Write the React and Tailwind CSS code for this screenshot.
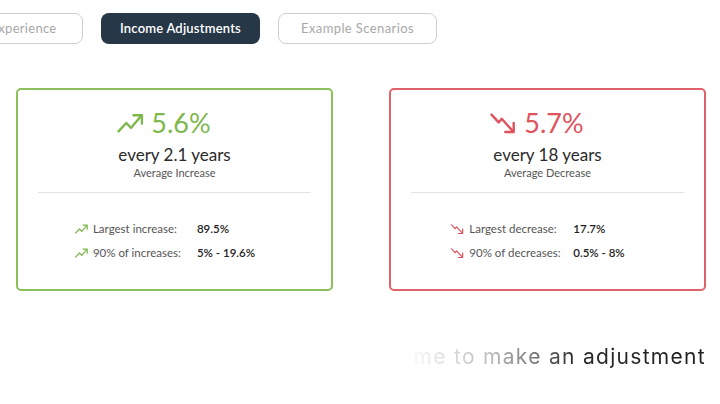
import React from "react";

const UpIcon = ({ className }) => (
  <svg viewBox="0 0 24 20" fill="none" stroke="currentColor" strokeWidth="2" strokeLinecap="round" strokeLinejoin="round" className={className}>
    <polyline points="2,17 8.5,10 12.5,14 21,4" />
    <polyline points="14.5,3.5 21.5,3.5 21.5,10.5" />
  </svg>
);

const DownIcon = ({ className }) => (
  <svg viewBox="0 0 24 20" fill="none" stroke="currentColor" strokeWidth="2" strokeLinecap="round" strokeLinejoin="round" className={className}>
    <polyline points="2,3 8,9.5 10.5,6.5 20,17" />
    <polyline points="20.5,10 20.5,17.5 13.5,17.5" />
  </svg>
);

function Card({ color, border, Icon, value, every, label, rows }) {
  return (
    <div className={`w-[317px] h-[203px] border-2 ${border} rounded-[5px] bg-white flex flex-col items-center pt-[14px]`}>
      <div className={`flex items-center gap-[6px] mr-[22px] ${color}`}>
        <Icon className="w-[29px] h-[24px]" />
        <span className="text-[27px] leading-[38px]">{value}</span>
      </div>
      <div className="text-[17px] leading-[20px] text-[#2a2a2a] mt-[3px]">{every}</div>
      <div className="text-[11px] leading-[14px] text-[#555] mt-[1px]">{label}</div>
      <div className="w-[273px] h-px bg-[#e2e2e2] mt-[12px]" />
      <div className="flex flex-col gap-[8px] mt-[28px] mr-[20px]">
        {rows.map((r) => (
          <div key={r[0]} className="flex items-center text-[11.5px] leading-[16px]">
            <Icon className={`w-[15px] h-[12px] mr-[4px] ${color}`} />
            <span className="w-[104px] text-[#555]">{r[0]}</span>
            <span className="text-[#222] font-semibold">{r[1]}</span>
          </div>
        ))}
      </div>
    </div>
  );
}

export default function App() {
  return (
    <div className="w-[720px] h-[404px] bg-white overflow-hidden relative" style={{ fontFamily: "Lato, 'Open Sans', sans-serif" }}>
      <div className="flex gap-[18px] ml-[-76px] mt-[13px]">
        <div className="w-[159px] h-[31px] rounded-[8px] border border-[#cfcfcf] flex items-center justify-center text-[13px] tracking-[0.3px] text-[#a8a8a8] pl-[40px]">Experience</div>
        <div className="w-[159px] h-[31px] rounded-[8px] bg-[#263748] flex items-center justify-center text-[13px] tracking-[0.2px] text-white font-semibold">Income Adjustments</div>
        <div className="w-[159px] h-[31px] rounded-[8px] border border-[#cfcfcf] flex items-center justify-center text-[13px] tracking-[0.4px] text-[#a8a8a8]">Example Scenarios</div>
      </div>
      <div className="flex gap-[56px] ml-[16px] mt-[44px]">
        <Card
          color="text-[#7cb84c]"
          border="border-[#8cc05a]"
          Icon={UpIcon}
          value="5.6%"
          every="every 2.1 years"
          label="Average Increase"
          rows={[["Largest increase:", "89.5%"], ["90% of increases:", "5% - 19.6%"]]}
        />
        <Card
          color="text-[#e0535d]"
          border="border-[#e0626b]"
          Icon={DownIcon}
          value="5.7%"
          every="every 18 years"
          label="Average Decrease"
          rows={[["Largest decrease:", "17.7%"], ["90% of decreases:", "0.5% - 8%"]]}
        />
      </div>
      <div className="flex justify-end mr-[14px] mt-[52px]">
        <span
          className="text-[21px] leading-[28px] tracking-[1.3px] bg-clip-text text-transparent"
          style={{ fontFamily: "Inter, sans-serif", backgroundImage: "linear-gradient(90deg, rgba(40,40,40,0.04) 0%, rgba(40,40,40,0.3) 25%, rgba(40,40,40,0.6) 40%, rgba(30,30,30,0.95) 55%, #1f1f1f 100%)" }}
        >
          me to make an adjustment
        </span>
      </div>
    </div>
  );
}
